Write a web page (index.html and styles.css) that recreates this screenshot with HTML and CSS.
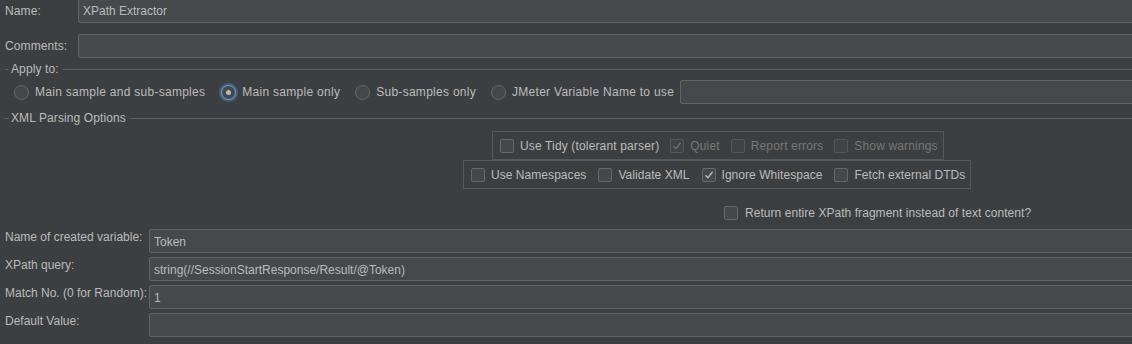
FILE: index.html
```html
<!DOCTYPE html>
<html>
<head>
<meta charset="utf-8">
<link rel="stylesheet" href="styles.css">
</head>
<body>
<div class="page">
  <div class="row row-name">
    <span class="lbl lbl-top">Name:</span>
    <div class="field">XPath Extractor</div>
  </div>
  <div class="row row-comments">
    <span class="lbl lbl-top">Comments:</span>
    <div class="field"></div>
  </div>

  <div class="group-title"><span class="dash"></span><span class="gt-text">Apply to:</span><span class="gline"></span></div>
  <div class="radios">
    <label class="radio"><span class="rb"></span>Main sample and sub-samples</label>
    <label class="radio sel"><span class="rb"><span class="dot"></span></span>Main sample only</label>
    <label class="radio"><span class="rb"></span>Sub-samples only</label>
    <label class="radio"><span class="rb"></span>JMeter Variable Name to use</label>
    <div class="field var-field"></div>
  </div>

  <div class="group-title g2"><span class="dash"></span><span class="gt-text">XML Parsing Options</span><span class="gline"></span></div>

  <div class="box box-tidy">
    <label class="cb"><span class="ck"></span>Use Tidy (tolerant parser)</label>
    <label class="cb dis"><span class="ck on"><svg width="12" height="12" viewBox="0 0 12 12"><path d="M2.5 6.2 L5 8.8 L9.6 2.8" fill="none" stroke="#6e6e6e" stroke-width="1.4"/></svg></span>Quiet</label>
    <label class="cb dis"><span class="ck"></span>Report errors</label>
    <label class="cb dis"><span class="ck"></span>Show warnings</label>
  </div>
  <div class="box box-ns">
    <label class="cb"><span class="ck"></span>Use Namespaces</label>
    <label class="cb"><span class="ck"></span>Validate XML</label>
    <label class="cb"><span class="ck on"><svg width="12" height="12" viewBox="0 0 12 12"><path d="M2.5 6.2 L5 8.8 L9.6 2.8" fill="none" stroke="#bbbbbb" stroke-width="1.4"/></svg></span>Ignore Whitespace</label>
    <label class="cb"><span class="ck"></span>Fetch external DTDs</label>
  </div>

  <div class="return-row">
    <label class="cb"><span class="ck"></span>Return entire XPath fragment instead of text content?</label>
  </div>

  <div class="form">
    <div class="frow"><span class="lbl">Name of created variable:</span><div class="field">Token</div></div>
    <div class="frow"><span class="lbl">XPath query:</span><div class="field">string(//SessionStartResponse/Result/@Token)</div></div>
    <div class="frow"><span class="lbl">Match No. (0 for Random):</span><div class="field">1</div></div>
    <div class="frow"><span class="lbl">Default Value:</span><div class="field"></div></div>
  </div>
</div>
</body>
</html>
```

FILE: styles.css
```css
html, body {
  margin: 0;
  padding: 0;
  background: #3c3f41;
  overflow: hidden;
}
body {
  width: 1132px;
  height: 344px;
  font-family: "Liberation Sans", Arial, sans-serif;
  font-size: 12px;
  color: #bbbbbb;
}
.page {
  width: 1140px;
  display: flex;
  flex-direction: column;
}
.row {
  display: flex;
  align-items: center;
  height: 24px;
  padding-left: 5px;
}
.row-name { margin-top: -1px; }
.row-comments { margin-top: 11px; }
.row .lbl { width: 73px; flex: none; letter-spacing: 0.1px; }
.field {
  flex: 1;
  height: 24px;
  box-sizing: border-box;
  background: #45494a;
  border: 1px solid #646464;
  border-radius: 2px;
  padding: 0 4px;
  line-height: 22px;
  color: #bbbbbb;
  white-space: nowrap;
}
.group-title {
  display: flex;
  align-items: center;
  height: 14px;
  margin-top: 4px;
  padding-left: 5px;
}
.group-title .dash {
  width: 4px;
  height: 1px;
  background: #5e6163;
  margin-right: 2px;
}
.group-title .gt-text { padding-right: 4px; line-height: 14px; letter-spacing: 0.1px; }
.group-title .gline { flex: 1; height: 1px; background: #5e6163; }
.g2 { margin-top: 7px; }

.radios {
  display: flex;
  align-items: center;
  height: 24px;
  margin-top: 4px;
  padding-left: 14px;
  letter-spacing: 0.28px;
}
.radio {
  display: flex;
  align-items: center;
  margin-right: 15px;
  white-space: nowrap;
}
.rb {
  width: 15px;
  height: 15px;
  box-sizing: border-box;
  border-radius: 50%;
  border: 1px solid #666869;
  background: #43494a;
  margin-right: 6px;
  display: flex;
  align-items: center;
  justify-content: center;
}
.radio.sel .rb {
  border-color: #7ea0c6;
  box-shadow: 0 0 0 2px #3d6185;
}
.radio.sel { margin-left: 1px; }
.dot {
  width: 5px;
  height: 5px;
  border-radius: 50%;
  background: #bbbbbb;
}
.var-field { margin-left: -9px; }

.box {
  display: flex;
  align-items: center;
  gap: 11px;
  height: 29px;
  box-sizing: border-box;
  border: 1px solid #56595b;
  padding-left: 7px;
  align-self: flex-start;
  letter-spacing: 0.15px;
}
.box-tidy { margin-left: 492px; margin-top: 6px; width: 452px; }
.box-ns { margin-left: 463px; width: 508px; gap: 12px; letter-spacing: 0.05px; }
.cb {
  display: flex;
  align-items: center;
  white-space: nowrap;
}
.cb.dis { color: #777777; }
.ck {
  width: 14px;
  height: 14px;
  box-sizing: border-box;
  border: 1px solid #666869;
  background: #43494a;
  border-radius: 2px;
  margin-right: 6px;
  display: flex;
  align-items: center;
  justify-content: center;
}
.cb.dis .ck { border-color: #555859; background: #3f4345; }
.return-row {
  display: flex;
  margin-top: 16px;
  padding-left: 724px;
  height: 15px;
  align-items: center;
  letter-spacing: 0.05px;
}
.return-row .ck { margin-right: 7px; }

.form {
  display: flex;
  flex-direction: column;
  gap: 4px;
  margin-top: 9px;
  padding-left: 5px;
}
.frow {
  display: flex;
  align-items: flex-start;
  height: 24px;
}
.frow .lbl {
  width: 144px;
  flex: none;
  line-height: 14px;
  padding-top: 1px;
  white-space: nowrap;
}
.frow .field { padding-top: 2px; line-height: 20px; }
```
